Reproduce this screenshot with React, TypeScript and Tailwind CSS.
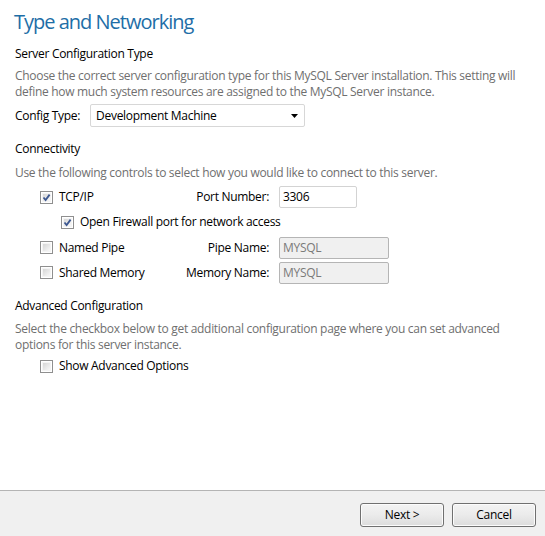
import React from 'react';

const font = { fontFamily: '"Open Sans", "Noto Sans", sans-serif' };

const Check: React.FC<{ checked?: boolean }> = ({ checked }) => (
  <span className="relative inline-block w-[13px] h-[13px] shrink-0 border border-[#8f8f8f] bg-white">
    <span className="absolute inset-[1px] bg-gradient-to-br from-[#d6d6d6] to-[#f8f8f8] border border-[#f4f4f4]" />
    {checked && (
      <svg className="absolute inset-0" width="11" height="11" viewBox="0 0 11 11">
        <path d="M2.5 5.5 L4.6 8 L8.6 2.6" fill="none" stroke="#3c5790" strokeWidth="1.8" />
      </svg>
    )}
  </span>
);

const Field: React.FC<{ value: string; disabled?: boolean; w: string }> = ({ value, disabled, w }) => (
  <div
    className={`h-[22px] ${w} px-[3px] flex items-center text-[12px] rounded-[2px] border ${
      disabled ? 'bg-[#f0f0f0] border-[#b5b5b5] text-[#7a7a7a]' : 'bg-white border-[#d3d3d3] text-black'
    }`}
  >
    {value}
  </div>
);

const Row: React.FC<{ checked?: boolean; text: string; label: string; value: string; disabled?: boolean; w: string; h: string }> = ({
  checked, text, label, value, disabled, w, h,
}) => (
  <div className={`flex items-center pl-[25px] ${h}`}>
    <div className="w-[140px] flex items-center gap-[6px]">
      <Check checked={checked} />
      <span>{text}</span>
    </div>
    <div className="w-[89px] text-right">{label}</div>
    <div className="ml-[10px]">
      <Field value={value} disabled={disabled} w={w} />
    </div>
  </div>
);

export default function App() {
  return (
    <div
      className="w-[545px] h-[536px] bg-white flex flex-col text-[12px] leading-[16px] tracking-[-0.3px] text-black"
      style={font}
    >
      <div className="flex-1 pl-[15px] pr-[10px]">
        <h1 className="text-[20px] leading-[28px] tracking-[-1px] text-[#1e6ea7] mt-[8px] -ml-[1px]">Type and Networking</h1>

        <div className="mt-[10px]">Server Configuration Type</div>
        <div className="mt-[6px] text-[#6f6f6f] whitespace-nowrap">
          Choose the correct server configuration type for this MySQL Server installation. This setting will
          <br />
          define how much system resources are assigned to the MySQL Server instance.
        </div>
        <div className="mt-[4px] flex items-center gap-[10px]">
          <span>Config Type:</span>
          <div className="w-[215px] h-[23px] border border-[#d7d7d7] rounded-[2px] bg-white flex items-center pl-[5px] pr-[6px]">
            <span className="flex-1">Development Machine</span>
            <svg width="7" height="4" viewBox="0 0 7 4">
              <path d="M0 0 H7 L3.5 4 Z" fill="#000" />
            </svg>
          </div>
        </div>

        <div className="mt-[14px]">Connectivity</div>
        <div className="mt-[8px] text-[#6f6f6f] whitespace-nowrap">
          Use the following controls to select how you would like to connect to this server.
        </div>
        <div className="mt-[4px]">
          <Row checked text="TCP/IP" label="Port Number:" value="3306" w="w-[78px]" h="h-[24px]" />
          <div className="flex items-center gap-[6px] pl-[46px] h-[26px]">
            <Check checked />
            <span>Open Firewall port for network access</span>
          </div>
          <Row text="Named Pipe" label="Pipe Name:" value="MYSQL" disabled w="w-[110px]" h="h-[25px]" />
          <Row text="Shared Memory" label="Memory Name:" value="MYSQL" disabled w="w-[110px]" h="h-[25px]" />
        </div>

        <div className="mt-[13px]">Advanced Configuration</div>
        <div className="mt-[7px] text-[#6f6f6f] whitespace-nowrap">
          Select the checkbox below to get additional configuration page where you can set advanced
          <br />
          options for this server instance.
        </div>
        <div className="mt-[5px] pl-[25px] flex items-center gap-[6px]">
          <Check />
          <span>Show Advanced Options</span>
        </div>
      </div>

      <div className="h-[46px] shrink-0 border-t border-[#b4b4b4] bg-[#f0f0f0] flex items-start justify-end gap-[8px] pt-[12px] pr-[9px]">
        {['Next >', 'Cancel'].map((t) => (
          <button
            key={t}
            className="w-[84px] h-[24px] rounded-[3px] border border-[#707070] bg-gradient-to-b from-[#f3f3f3] via-[#ebebeb] to-[#dcdcdc] text-[12px] text-black shadow-[inset_0_0_0_1px_#fcfcfc]"
          >
            {t}
          </button>
        ))}
      </div>
    </div>
  );
}
